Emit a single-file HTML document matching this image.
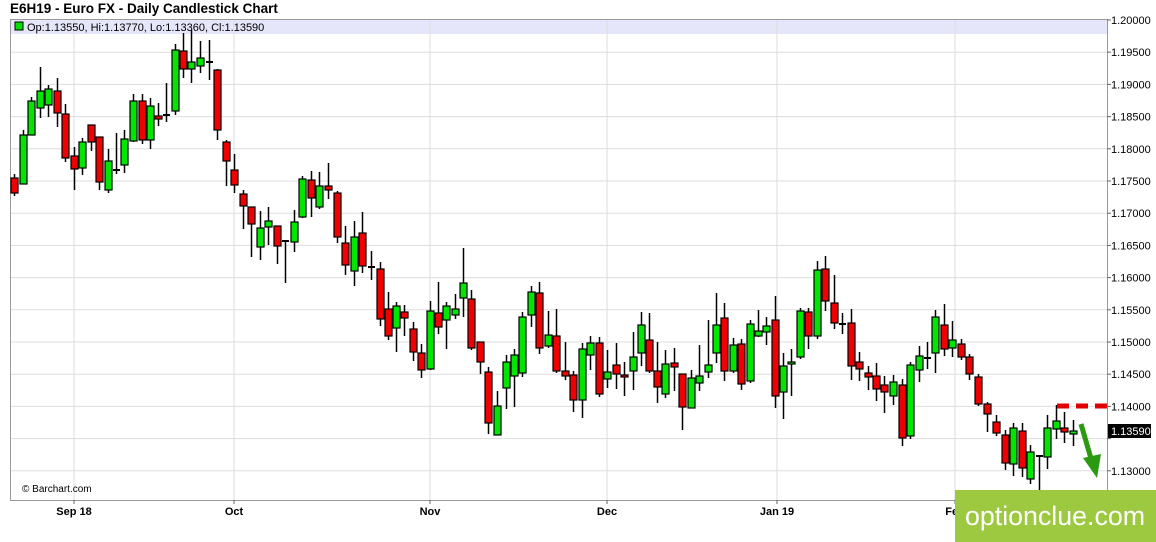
<!DOCTYPE html>
<html><head><meta charset="utf-8"><style>
html,body{margin:0;padding:0;background:#fff;width:1156px;height:542px;overflow:hidden;font-family:"Liberation Sans",sans-serif}
</style></head><body>
<svg id="s" width="1156" height="542" xmlns="http://www.w3.org/2000/svg" style="position:absolute;left:0;top:0">
<text x="10" y="13" font-size="13.5" font-weight="bold" fill="#000" font-family="Liberation Sans">E6H19 - Euro FX - Daily Candlestick Chart</text>
<rect x="10.5" y="19.5" width="1097" height="481" fill="#fff" stroke="#999"/>
<rect x="11" y="20" width="1096" height="14" fill="#e6e6fa"/>
<g id="grid"></g>
<g id="c"></g>
<rect x="15" y="22" width="8" height="8" fill="#00e000" stroke="#000" stroke-width="1"/>
<text x="27" y="31" font-size="11" fill="#000">Op:1.13550, Hi:1.13770, Lo:1.13360, Cl:1.13590</text>
<text x="22" y="492" font-size="10" fill="#000">© Barchart.com</text>
<line x1="1057" y1="406" x2="1107" y2="406" stroke="#e00000" stroke-width="5" stroke-dasharray="12,7"/>
<rect x="1108" y="424" width="43" height="14" fill="#000"/>
<text x="1111" y="435" font-size="11" fill="#fff">1.13590</text>
<line x1="1081" y1="424" x2="1092" y2="462" stroke="#2a9a10" stroke-width="5"/>
<polygon points="1083,458 1101,454 1097,478" fill="#2a9a10"/>
<rect x="955" y="490" width="201" height="52" fill="#9dc941"/>
<text x="1055" y="525" font-size="27" fill="#fff" text-anchor="middle" textLength="180" lengthAdjust="spacingAndGlyphs">optionclue.com</text>
</svg>
<script>
var g=document.getElementById('grid'),c=document.getElementById('c'),h='';
var labs=['1.20000','1.19500','1.19000','1.18500','1.18000','1.17500','1.17000','1.16500','1.16000','1.15500','1.15000','1.14500','1.14000','1.13500','1.13000'];
for(var k=0;k<15;k++){var y=20+32.2*k;if(k>0)h+='<line x1="11" y1="'+y+'" x2="1107" y2="'+y+'" stroke="#ddd"/>';h+='<line x1="1107" y1="'+y+'" x2="1111" y2="'+y+'" stroke="#666"/>';if(k!=13)h+='<text x="1111" y="'+(y+4)+'" font-size="11" fill="#000">'+labs[k]+'</text>';}
[[74,'Sep 18'],[234,'Oct'],[430,'Nov'],[607,'Dec'],[777,'Jan 19'],[955,'Feb']].forEach(function(v){h+='<line x1="'+v[0]+'" y1="20" x2="'+v[0]+'" y2="500" stroke="#ddd"/><line x1="'+v[0]+'" y1="500" x2="'+v[0]+'" y2="504" stroke="#666"/><text x="'+v[0]+'" y="515" font-size="11" font-weight="bold" text-anchor="middle">'+v[1]+'</text>';});
g.innerHTML=h;
var d=[[14,'r',178,193,174,196],[23,'g',135,184,130,184],[31,'g',101,135,97,135],[40,'g',91,108,67,118],[48,'g',89,105,85,117],[57,'r',91,113,78,127],[65,'r',114,158,104,162],[74,'r',156,169,147,190],[82,'g',142,168,138,175],[91,'r',125,142,125,151],[99,'r',137,182,137,190],[108,'g',161,190,149,193],[116,'f',170,170,133,174],[124,'g',139,165,130,173],[133,'g',101,141,94,142],[142,'r',101,140,94,144],[150,'g',106,140,98,149],[158,'r',116,119,103,126],[166,'f',115,115,83,122],[175,'g',50,111,44,115],[183,'r',51,69,33,78],[191,'g',62,69,30,83],[200,'g',58,66,41,73],[209,'f',62,62,40,80],[217,'r',70,130,69,140],
[226,'r',142,161,140,186],[234,'r',170,185,154,193],[243,'r',194,206,190,229],[251,'r',207,224,207,257],[260,'g',228,247,211,260],[268,'g',221,227,207,245],[277,'r',226,246,226,264],[285,'f',241,241,241,283],[294,'g',222,242,210,252],[302,'g',179,217,176,218],[311,'r',180,198,171,217],[319,'g',186,207,172,209],[328,'r',186,190,163,199],[337,'r',193,237,191,243],[345,'r',243,265,226,275],[354,'g',237,271,221,286],[362,'r',233,266,212,273],[371,'f',267,267,251,280],[380,'r',269,319,262,326],[388,'r',309,336,292,340],[396,'g',306,328,302,352],[404,'r',312,318,305,336],[413,'r',329,352,322,361],[421,'r',353,370,344,378],[430,'g',311,369,301,370],[438,'r',313,327,282,334],[446,'g',306,320,302,349],[455,'g',309,315,294,319],[463,'g',283,298,248,317],[471,'r',299,348,290,350],[480,'r',342,362,342,374],[488,'r',372,423,367,434],[497,'g',406,435,391,435],
[506,'g',362,388,355,409],[514,'g',355,376,349,407],[522,'g',317,373,312,377],[531,'g',292,315,286,327],[539,'r',293,348,282,354],[548,'g',335,346,311,348],[556,'r',336,371,309,373],[565,'r',371,376,342,380],[573,'r',375,400,371,412],[582,'g',349,400,343,418],[590,'g',343,355,336,370],[599,'r',343,394,337,397],[607,'g',372,379,350,388],[616,'r',365,374,343,389],[624,'r',375,376,362,396],[633,'g',357,371,332,390],[641,'g',325,353,312,366],[649,'r',340,371,313,373],[657,'r',371,387,342,403],[665,'g',364,394,350,398],[674,'r',363,367,348,391],[682,'r',374,407,374,430],[691,'g',378,408,370,408],[699,'g',376,383,345,391],[708,'g',365,372,320,378],[716,'g',325,353,293,363],[724,'r',318,371,303,381],[733,'g',345,371,338,373],[741,'r',344,384,339,390],[750,'g',324,381,320,383],[758,'g',331,336,310,337],[766,'g',326,332,317,345],
[775,'r',320,396,296,408],[783,'g',366,392,353,419],[791,'g',362,364,349,396],[800,'g',311,357,308,359],[808,'r',312,336,308,349],[817,'g',270,336,261,339],[825,'r',269,301,256,311],[834,'r',303,323,275,329],[842,'f',324,324,313,334],[851,'r',323,366,309,380],[859,'r',362,369,352,381],[868,'r',373,377,366,390],[876,'r',376,389,363,401],[884,'r',385,392,376,413],[893,'g',382,396,375,405],[902,'r',385,438,379,446],[910,'g',365,436,362,439],[919,'g',356,370,346,382],[927,'f',358,358,342,369],[935,'g',317,353,310,373],[944,'r',325,349,304,356],[952,'g',340,348,321,357],[961,'r',344,357,339,360],[969,'r',357,374,354,380],[978,'r',377,404,374,406],
[987,'r',404,414,402,432],[996,'r',422,433,415,436],[1005,'r',435,463,430,470],[1013,'g',428,464,423,476],[1022,'r',431,468,423,477],[1030,'g',452,479,445,484],[1039,'f',456,456,456,492],[1047,'g',428,457,415,469],[1056,'g',421,429,405,439],[1064,'r',428,432,412,443],[1073,'g',431,434,420,446]];
h='';d.forEach(function(v){var x=v[0];h+='<line x1="'+(x+0.5)+'" y1="'+v[4]+'" x2="'+(x+0.5)+'" y2="'+v[5]+'" stroke="#000" stroke-width="1.5"/>';
if(v[1]=='f'){h+='<line x1="'+(x-3)+'" y1="'+v[2]+'" x2="'+(x+4)+'" y2="'+v[2]+'" stroke="#000" stroke-width="2"/>';}
else{h+='<rect x="'+(x-3)+'" y="'+v[2]+'" width="7" height="'+Math.max(v[3]-v[2],2)+'" fill="'+(v[1]=='g'?'#00e600':'#f00000')+'" stroke="#000" stroke-width="1.2"/>';}});
c.innerHTML=h;
</script>
</body></html>
